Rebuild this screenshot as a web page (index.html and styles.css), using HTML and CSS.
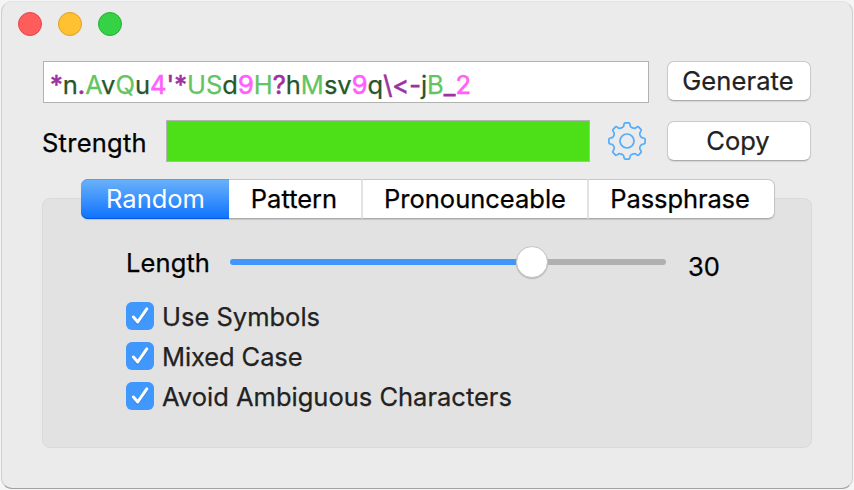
FILE: index.html
```html
<!DOCTYPE html>
<html lang="en">
<head>
<meta charset="utf-8">
<title>Password Generator</title>
<link rel="stylesheet" href="styles.css">
</head>
<body>
<main class="window">
  <header class="titlebar">
    <span class="light close"></span><span class="light minimize"></span><span class="light zoom"></span>
  </header>
  <div class="row password-row">
    <div class="password"><span class="password-text"><i class="s">*</i><i class="l">n</i><i class="s">.</i><i class="u">A</i><i class="l">v</i><i class="u">Q</i><i class="l">u</i><i class="d">4</i><i class="s">'*</i><i class="u">US</i><i class="l">d</i><i class="d">9</i><i class="u">H</i><i class="s">?</i><i class="l">h</i><i class="u">M</i><i class="l">sv</i><i class="d">9</i><i class="l">q</i><i class="s">\&lt;-</i><i class="l">j</i><i class="u">B</i><i class="s">_</i><i class="d">2</i></span></div>
    <button class="button"><span class="t-generate">Generate</span></button>
  </div>
  <div class="row strength-row">
    <span class="strength-label">Strength</span>
    <div class="strength-bar"></div>
    <svg class="gear" viewBox="0 0 38 38" fill="none" stroke="#55acfa" stroke-width="1.7" stroke-linejoin="round">
      <circle cx="19" cy="19" r="7"/>
      <path id="gear-outline" d=""/>
    </svg>
    <button class="button"><span class="t-copy">Copy</span></button>
  </div>
  <section class="modes">
    <nav class="tabs">
      <button class="tab active"><span class="t-random">Random</span></button>
      <button class="tab pattern"><span class="t-pattern">Pattern</span></button>
      <button class="tab pronounceable"><span class="t-pron">Pronounceable</span></button>
      <button class="tab passphrase"><span class="t-pass">Passphrase</span></button>
    </nav>
    <div class="panel">
      <div class="length-row">
        <span class="length-label">Length</span>
        <div class="slider"><span class="track filled"></span><span class="thumb"></span><span class="track rest"></span></div>
        <span class="length-value">30</span>
      </div>
      <div class="checks">
        <label class="check"><svg class="box" viewBox="0 0 28 28"><path class="shade" d="M7.4 16 11.7 21 20.8 7.7"/><path class="mark" d="M7.4 15 11.7 20 20.8 6.9"/></svg><span class="check-label">Use Symbols</span></label>
        <label class="check"><svg class="box" viewBox="0 0 28 28"><path class="shade" d="M7.4 16 11.7 21 20.8 7.7"/><path class="mark" d="M7.4 15 11.7 20 20.8 6.9"/></svg><span class="check-label t-mixed">Mixed Case</span></label>
        <label class="check"><svg class="box" viewBox="0 0 28 28"><path class="shade" d="M7.4 16 11.7 21 20.8 7.7"/><path class="mark" d="M7.4 15 11.7 20 20.8 6.9"/></svg><span class="check-label">Avoid Ambiguous Characters</span></label>
      </div>
    </div>
  </section>
</main>
<script src="gear.js"></script>
</body>
</html>
```
FILE: gear.js
```js
// Builds the eight-toothed outline of the settings gear, one tooth every 45 degrees.
(function () {
  var point = function (r, deg) {
    var a = (deg - 90) * Math.PI / 180;
    return (19 + r * Math.cos(a)).toFixed(2) + ' ' + (19 + r * Math.sin(a)).toFixed(2);
  };
  var d = 'M' + point(18.2, -6);
  for (var i = 0; i < 8; i++) {
    var t = i * 45;
    d += 'L' + point(18.2, t + 6);
    d += 'Q' + point(18, t + 9) + ' ' + point(16.6, t + 10.5);
    d += 'Q' + point(14.8, t + 12) + ' ' + point(14.5, t + 17);
    d += 'Q' + point(13.9, t + 22.5) + ' ' + point(14.5, t + 28);
    d += 'Q' + point(14.8, t + 33) + ' ' + point(16.6, t + 34.5);
    d += 'Q' + point(18, t + 36) + ' ' + point(18.2, t + 39);
  }
  document.getElementById('gear-outline').setAttribute('d', d + 'Z');
})();
```
FILE: styles.css
```css
* { box-sizing: border-box; }
body { margin: 0; height: 490px; padding: 1px 1px 1px 1px; background: #f5f5f5; overflow: hidden; font: 25.5px/32px Inter, "Liberation Sans", sans-serif; -webkit-text-stroke: .25px; color: #000; }
.window { height: 488px; border: 1px solid #cfcfcf; border-top-color: #e4e4e4; border-bottom-color: #a2a2a2; border-radius: 11px; background: #ebebeb; padding: 10px 41px 0 41px; }
span { white-space: nowrap; }
.titlebar { display: flex; gap: 16px; height: 49px; margin-left: -25px; }
.light { width: 24px; height: 24px; border-radius: 50%; border: 1px solid; }
.close { background: #ff5c5c; border-color: #e4444a; }
.minimize { background: #ffc130; border-color: #dfa02c; }
.zoom { background: #36d245; border-color: #27ae32; }
.row { display: flex; align-items: flex-start; width: 768px; }
.password-row { height: 59px; justify-content: space-between; }
.password { width: 606px; height: 42px; border: 1px solid #b2b2b2; background: #fff; padding: 7px 0 0 6px; }
.password-text { display: block; letter-spacing: 0; font-variant-ligatures: none; font-feature-settings: "calt" 0; }
i { font-style: normal; }
.s { color: #9d319f; -webkit-text-stroke: .6px; }
.l { color: #26572a; }
.u { color: #62c462; }
.d { color: #ff60fb; -webkit-text-stroke: .6px; }
.button { font: inherit; color: #222; width: 144px; height: 40px; padding: 0; border: 1px solid #cacaca; border-bottom-color: #acacac; border-radius: 7px; background: #fff; box-shadow: 0 1px 1px #d5d5d5; }
.button span { position: relative; left: -1px; }
.t-generate { letter-spacing: .1px; }
.strength-row { height: 59px; }
.strength-label { width: 124px; margin-left: -1px; padding-top: 7px; letter-spacing: .25px; }
.strength-bar { width: 424px; height: 42px; border: 1px solid #b4b4b4; background: #4de018; }
.gear { width: 38px; height: 38px; margin: 2px 20px 0 18px; }
.strength-row .button { margin: 1px 0 0 1px; flex: none; }
.modes { display: grid; width: 770px; margin-left: -1px; }
.tabs, .panel { grid-area: 1 / 1; }
.tabs { display: flex; z-index: 1; width: 694px; height: 40px; margin-left: 39px; border-radius: 7px; box-shadow: 0 1px 1px #c6c6c6; align-self: start; }
.tab { font: inherit; color: #000; border: 1px solid #c7c7c7; border-width: 1px 0; border-bottom-color: #aaa; padding: 0; background: #fff; }
.tab.active { width: 148px; border: 0; border-radius: 7px 0 0 7px; padding-left: 1px; color: #fff; -webkit-text-stroke: 0; background: linear-gradient(#6cb2fa, #0d72ff); box-shadow: inset 0 1px #5b9fe8, inset 0 -1px #0758de; }
.pattern { width: 134px; padding-right: 2px; border-right: 2px solid #e2e2e2; }
.pronounceable { width: 226px; border-right: 2px solid #e2e2e2; }
.passphrase { width: 186px; padding-right: 3px; letter-spacing: -.1px; border-right: 1px solid #c4c4c4; border-radius: 0 7px 7px 0; }
.panel { margin-top: 19px; height: 250px; border: 1px solid #dadada; border-radius: 8px; background: #e2e2e2; padding: 47px 0 0 83px; }
.length-row { display: flex; height: 56px; }
.length-label { width: 104px; padding-top: 1px; letter-spacing: .1px; }
.slider { display: flex; align-items: center; width: 436px; height: 32px; }
.track { height: 6px; }
.filled { width: 288px; background: #4096fd; border-radius: 3px 0 0 3px; }
.rest { flex: 1; margin-left: -2px; background: #b0b0b0; border-radius: 0 3px 3px 0; }
.thumb { width: 32px; height: 32px; margin-left: -2px; border-radius: 50%; border: 1px solid #c4c4c4; background: #fff; box-shadow: 0 1px 1px #b5b5b5; z-index: 1; flex: none; }
.length-value { margin-left: 22px; padding-top: 5px; }
.checks { display: grid; gap: 12px; color: #222; }
.check { display: flex; align-items: center; gap: 8px; height: 28px; }
.check-label { padding-top: 1px; }
.t-mixed { letter-spacing: -.1px; }
.box { width: 28px; height: 28px; border-radius: 6px; background: #4097fd; fill: none; stroke-linecap: round; stroke-linejoin: round; }
.mark { stroke: #fff; stroke-width: 3; }
.shade { stroke: #2c7ee0; stroke-width: 3; }
```
